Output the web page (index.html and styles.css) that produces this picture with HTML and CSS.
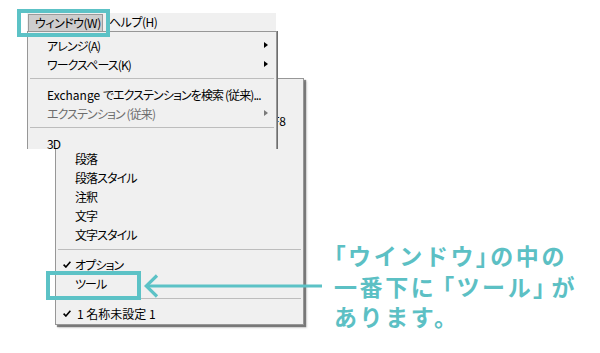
FILE: index.html
```html
<!DOCTYPE html>
<html lang="ja">
<head>
<meta charset="utf-8">
<link rel="stylesheet" href="styles.css">
</head>
<body>
<div class="stage">
  <div class="menubar">
    <div class="mb-item pressed">ウィンドウ(W)</div>
    <div class="mb-item">ヘルプ(H)</div>
  </div>

  <div class="menu menu2">
    <div class="row"><span class="label"></span><span class="shortcut">F8</span></div>
    <div class="row"><span class="label"></span></div>
    <div class="row"><span class="label">段落</span></div>
    <div class="row"><span class="label">段落スタイル</span></div>
    <div class="row"><span class="label">注釈</span></div>
    <div class="row"><span class="label">文字</span></div>
    <div class="row"><span class="label">文字スタイル</span></div>
    <div class="sep"></div>
    <div class="row"><svg class="check" viewBox="0 0 8 7" width="8" height="7"><path d="M0.6 3.6 L2.9 6 L7.4 0.8" fill="none" stroke="#000" stroke-width="1.6"/></svg><span class="label">オプション</span></div>
    <div class="row"><span class="label">ツール</span></div>
    <div class="sep"></div>
    <div class="row"><svg class="check" viewBox="0 0 8 7" width="8" height="7"><path d="M0.6 3.6 L2.9 6 L7.4 0.8" fill="none" stroke="#000" stroke-width="1.6"/></svg><span class="label doc">1 名称未設定 1</span></div>
  </div>

  <div class="menu menu1">
    <div class="row"><span class="label">アレンジ(A)</span><span class="tri"></span></div>
    <div class="row"><span class="label">ワークスペース(K)</span><span class="tri"></span></div>
    <div class="sep"></div>
    <div class="row"><span class="label"><span class="lat">Exchange </span>でエクステンションを検索 (従来)...</span></div>
    <div class="row disabled"><span class="label">エクステンション (従来)</span><span class="tri"></span></div>
    <div class="sep"></div>
    <div class="row"><span class="label">3D</span></div>
  </div>

  <div class="hl hl-window"></div>
  <div class="hl hl-tool"></div>

  <svg class="arrow" width="180" height="26" viewBox="0 0 180 26">
    <path d="M2 12 H178" stroke="#5cc2c6" stroke-width="3.2" fill="none"/>
    <path d="M13 1.5 L2.2 12 L13 22.5" stroke="#5cc2c6" stroke-width="3.2" fill="none"/>
  </svg>

  <div class="caption">
    <div class="line"><span class="br">「</span>ウインドウ<span class="br">」</span>の中の</div>
    <div class="line">一番下に<span class="br open">「</span>ツール<span class="br close">」</span>が</div>
    <div class="line">あります。</div>
  </div>
</div>
</body>
</html>
```

FILE: styles.css
```css
html, body {
  margin: 0;
  padding: 0;
  background: #fff;
}
.stage {
  position: relative;
  width: 600px;
  height: 353px;
  overflow: hidden;
  background: #fff;
  font-family: "Noto Sans CJK JP", "Noto Sans", sans-serif;
  font-size: 12px;
  font-feature-settings: "palt";
  color: #000;
}
.menubar {
  position: absolute;
  left: 27px;
  top: 13px;
  width: 249px;
  height: 18px;
  background: #f0f0f0;
  display: flex;
  align-items: flex-start;
  letter-spacing: -0.5px;
}
.mb-item {
  height: 16px;
  line-height: 16px;
  padding: 0 5px 0 6px;
  margin-top: 1px;
  white-space: nowrap;
}
.pressed {
  margin-left: 1px;
  width: 62px;
  background: #cdcdcd;
  border: 1px solid #9a9a9a;
  border-bottom: none;
}
.menu {
  position: absolute;
  background: #f0f0f0;
  border: 1px solid #979797;
  box-sizing: border-box;
  display: flex;
  flex-direction: column;
  letter-spacing: -0.9px;
}
.menu1 {
  left: 27px;
  top: 31px;
  width: 250px;
  height: 118px;
  overflow: hidden;
  border-bottom: none;
  padding-top: 3.5px;
  box-shadow: 1px 0 0 #6e6e6e;
}
.menu2 {
  left: 55px;
  top: 78px;
  width: 249px;
  height: 247px;
  padding-top: 32px;
  box-shadow: 2px 2px 1px rgba(0,0,0,0.45), 3px 3px 2px rgba(0,0,0,0.15);
}
.row {
  position: relative;
  height: 19px;
  flex: none;
  display: flex;
  align-items: center;
  padding-left: 19px;
  padding-right: 8px;
  white-space: nowrap;
}
.row .label {
  flex: 1;
}
.lat {
  letter-spacing: 0;
}
.doc {
  letter-spacing: 0;
  padding-left: 2px;
}
.disabled {
  color: #6d6d6d;
}
.tri {
  width: 0;
  height: 0;
  border-left: 4px solid #000;
  border-top: 3.5px solid transparent;
  border-bottom: 3.5px solid transparent;
}
.disabled .tri {
  border-left-color: #7a7a7a;
}
.shortcut {
  padding-right: 9px;
  letter-spacing: 0;
}
.check {
  position: absolute;
  left: 7px;
  top: 6px;
}
.sep {
  flex: none;
  height: 11px;
  box-sizing: border-box;
  padding-top: 4px;
  margin: 0 2px;
}
.sep::before {
  content: "";
  display: block;
  height: 1px;
  background: #bdbdbd;
}
.menu2 .sep {
  padding-top: 5px;
}
.hl {
  position: absolute;
  border: 4px solid #5cc2c6;
  box-sizing: border-box;
}
.hl-window {
  left: 17px;
  top: 9px;
  width: 93px;
  height: 28px;
}
.hl-tool {
  left: 46px;
  top: 271px;
  width: 95px;
  height: 29px;
}
.arrow {
  position: absolute;
  left: 144px;
  top: 274px;
}
.caption {
  position: absolute;
  left: 334px;
  top: 240px;
  color: #5cc0c4;
  font-size: 23px;
  font-weight: 700;
  line-height: 30.5px;
  letter-spacing: 2.6px;
  font-feature-settings: normal;
  white-space: nowrap;
}
.caption .br {
  font-feature-settings: "palt";
}
.caption .open {
  margin-left: 6px;
}
.caption .close {
  margin-right: 4px;
}
```
